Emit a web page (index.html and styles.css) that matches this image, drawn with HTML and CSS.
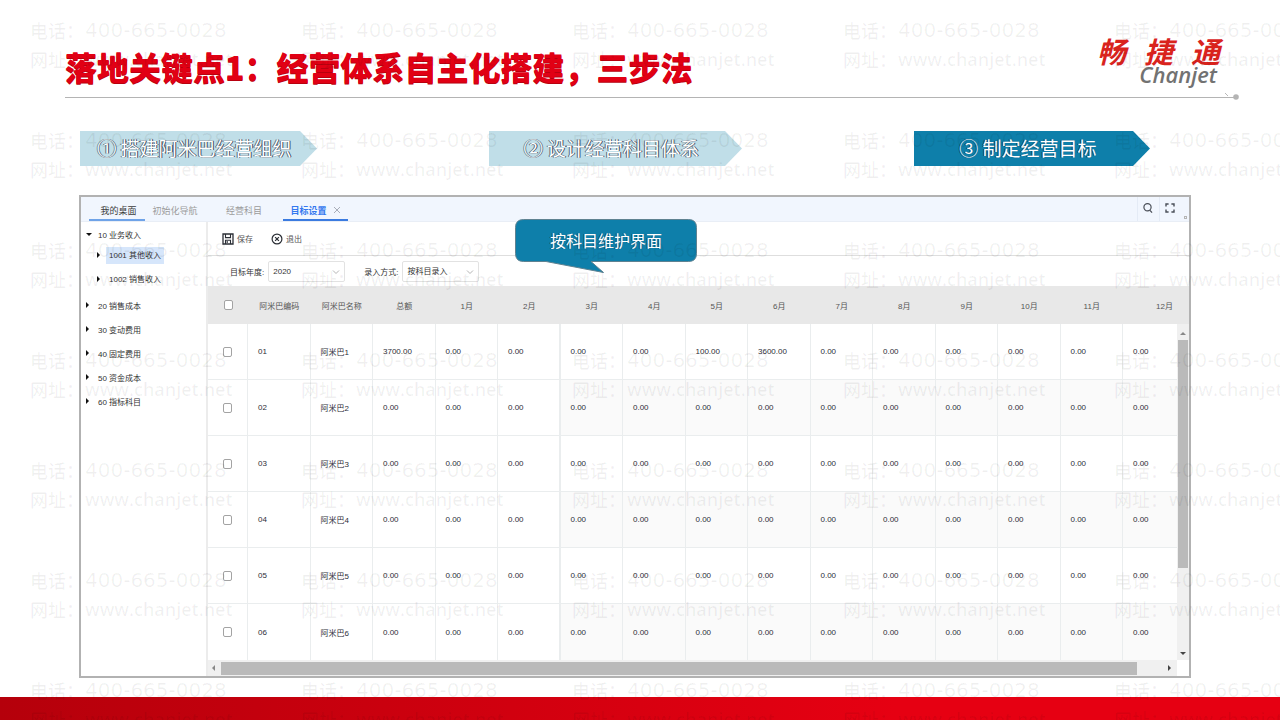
FILE: index.html
```html
<!DOCTYPE html>
<html lang="zh-CN">
<head>
<meta charset="utf-8">
<meta name="viewport" content="width=device-width, initial-scale=1">
<title>落地关键点1：经营体系自主化搭建，三步法</title>
<link rel="stylesheet" href="styles.css">
</head>
<body>
<div class="slide">
  <header class="slide-header">
    <h1 class="title">落地关键点1：经营体系自主化搭建，三步法</h1>
    <div class="logo">
      <div class="logo-cn"><span>畅</span><span>捷</span><span>通</span></div>
      <div class="logo-en">Chanjet</div>
    </div>
  </header>
  <div class="rule"><svg class="rule-end" viewBox="0 0 16 12" aria-hidden="true"><path d="M2 2l3 3" stroke="#b9b9b9"/><circle cx="13" cy="6" r="2.8" fill="#b4b4b4"/></svg></div>

  <ol class="steps">
    <li class="step">① 搭建阿米巴经营组织</li>
    <li class="step step-wide">② 设计经营科目体系</li>
    <li class="step step-active">③ 制定经营目标</li>
  </ol>

  <main class="app">
    <nav class="tabs">
      <button class="tab tab-home">我的桌面</button>
      <button class="tab tab-nav">初始化导航</button>
      <button class="tab tab-subject">经营科目</button>
      <button class="tab tab-current">目标设置
        <svg class="close" viewBox="0 0 8 8" aria-hidden="true"><path d="M1 1l6 6M7 1l-6 6" stroke="#a8adb8" fill="none"/></svg>
      </button>
      <div class="tab-tools">
        <button class="tool" aria-label="搜索"><svg viewBox="0 0 12 12"><circle cx="5.5" cy="5.3" r="3.6" fill="none" stroke="#4a4f58" stroke-width="1.2"/><path d="M8 8.4l2 2.2" stroke="#4a4f58" stroke-width="1.3"/></svg></button>
        <button class="tool" aria-label="全屏"><svg viewBox="0 0 12 12"><path d="M2 4.6V2h2.600M7.400 2H10v2.600M10 7.400V10H7.400M4.600 10H2V7.400" fill="none" stroke="#4a4f58" stroke-width="1.4"/></svg></button>
        <span class="grip"></span>
      </div>
    </nav>

    <div class="workspace">
      <aside class="side">
        <ul class="tree">
          <li><div class="node open">10 业务收入</div>
            <ul class="subtree">
              <li><div class="node"><span class="selected">1001 其他收入</span></div></li>
              <li><div class="node"><span class="leaf">1002 销售收入</span></div></li>
            </ul>
          </li>
          <li><div class="node">20 销售成本</div></li>
          <li><div class="node">30 变动费用</div></li>
          <li><div class="node">40 固定费用</div></li>
          <li><div class="node">50 资金成本</div></li>
          <li><div class="node">60 指标科目</div></li>
        </ul>
      </aside>

      <section class="content">
        <div class="actions">
          <button class="action"><svg viewBox="0 0 12 12" aria-hidden="true"><path d="M1 1h10v10H1z" fill="none" stroke="#2b2f36" stroke-width="1.3"/><path d="M3.5 1v3.6h5V1M3.5 11V7.2h5V11M5.2 8v2" fill="none" stroke="#2b2f36" stroke-width="1.1"/></svg>保存</button>
          <button class="action"><svg viewBox="0 0 12 12" aria-hidden="true"><circle cx="6" cy="6" r="4.9" fill="none" stroke="#2b2f36" stroke-width="1.2"/><path d="M4.1 4.1l3.8 3.8M7.9 4.1L4.1 7.9" stroke="#2b2f36" stroke-width="1.2"/></svg>退出</button>
        </div>
        <div class="filters">
          <div class="field">
            <label for="year">目标年度:</label>
            <div class="select-box"><select id="year"><option>2020</option></select><svg class="chevron" viewBox="0 0 8 8" aria-hidden="true"><path d="M1 2.5l3 3 3-3" fill="none" stroke="#b5b5b5"/></svg></div>
          </div>
          <div class="field">
            <label for="mode">录入方式:</label>
            <div class="select-box"><select id="mode"><option>按科目录入</option></select><svg class="chevron" viewBox="0 0 8 8" aria-hidden="true"><path d="M1 2.5l3 3 3-3" fill="none" stroke="#b5b5b5"/></svg></div>
          </div>
        </div>

        <table class="grid">
          <colgroup>
            <col class="col-check"><col span="14"><col class="col-last"><col class="col-scroll">
          </colgroup>
          <thead>
            <tr>
              <th><input type="checkbox" aria-label="全选"></th>
              <th>阿米巴编码</th><th>阿米巴名称</th><th>总额</th>
              <th>1月</th><th>2月</th><th>3月</th><th>4月</th><th>5月</th><th>6月</th><th>7月</th><th>8月</th><th>9月</th><th>10月</th><th>11月</th>
              <th class="head-last" colspan="2">12月</th>
            </tr>
          </thead>
          <tbody id="rows"></tbody>
        </table>
        <div class="hscroll">
          <div class="htrack"><i class="arrow arrow-left"></i><div class="hthumb"></div><i class="arrow arrow-right"></i></div>
        </div>
      </section>
    </div>

    <div class="callout">
      <svg class="callout-shape" viewBox="0 0 184 56" aria-hidden="true"><path d="M9.500 1.500H174.500Q182.500 1.500 182.500 9.500V35.500Q182.500 43.500 174.500 43.500H77L89.500 54.500L32 43.500H9.500Q1.500 43.500 1.500 35.500V9.500Q1.500 1.500 9.500 1.500Z" fill="#0e7faa" stroke="#5f8291"/></svg>
      <span class="callout-text">按科目维护界面</span>
    </div>
  </main>

  <footer class="footer"></footer>
  <div class="watermark" id="watermark" aria-hidden="true"></div>
</div>
<script src="script.js"></script>
</body>
</html>
```

FILE: styles.css
```css
*, *::before { box-sizing: border-box; }

body {
  margin: 0;
  background: #fff;
  color: #333;
  font-family: "Liberation Sans", "Noto Sans CJK SC", sans-serif;
}

button {
  border: 0;
  padding: 0;
  background: none;
  color: inherit;
  font: inherit;
}

ul, ol { margin: 0; padding: 0; list-style: none; }

.slide {
  position: relative;
  display: flex;
  flex-direction: column;
  min-height: 100vh;
  overflow: hidden;
}

/* Heading */
.slide-header {
  display: flex;
  justify-content: space-between;
  height: 97px;
  padding: 34px 60px 0 65px;
}

.title {
  margin: 8px 0 0;
  color: #e10014;
  font: 900 32px/48px "Noto Sans CJK SC", sans-serif;
  text-shadow: 0 1px 0 #b8000f;
}

.logo { display: flex; flex-direction: column; align-items: flex-end; }

.logo-cn {
  display: flex;
  gap: 18px;
  color: #d9231d;
  font: italic 700 29px/32px "Noto Sans CJK SC", sans-serif;
}

.logo-en {
  padding-right: 3px;
  color: #727272;
  font: italic 600 22px/16px "Open Sans", sans-serif;
}

.rule {
  position: relative;
  height: 1px;
  margin: 0 44px 0 65px;
  background: #b4b4b4;
}

.rule-end { position: absolute; right: -3px; top: -6px; width: 16px; height: 12px; }

/* Three step arrows */
.steps {
  display: flex;
  justify-content: space-between;
  margin: 33px 130px 29px 80px;
}

.step {
  display: flex;
  align-items: center;
  justify-content: center;
  width: 237px;
  height: 35px;
  padding: 0 8px 2px 0;
  background: #c0dee8;
  clip-path: polygon(0 0, calc(100% - 17px) 0, 100% 50%, calc(100% - 17px) 100%, 0 100%);
  color: #fff;
  font: 400 19px/28px "Noto Sans CJK SC", sans-serif;
  text-shadow: 1px 0 0 #3e4c5c, -1px 0 0 #56687a;
}

.step-wide { width: 253px; }

.step-active {
  width: 236px;
  background: #0e7faa;
  text-shadow: -1px 0 0 #10405e;
}

/* Application window */
.app {
  position: relative;
  display: flex;
  flex: 1;
  flex-direction: column;
  margin: 0 89px 19px 79px;
  border: 2px solid #b2b2b2;
  font-size: 8px;
}

.tabs {
  display: flex;
  height: 25px;
  padding-left: 8px;
  border-bottom: 1px solid #e9eef6;
  background: #f1f6fe;
  color: #9b9b9b;
  font-size: 9px;
}

.tab {
  display: flex;
  align-items: center;
  justify-content: center;
  gap: 6px;
  height: 24px;
  padding-top: 4px;
  border-bottom: 2px solid transparent;
}

.tab-home { width: 56px; padding-left: 3px; border-color: #6fa3e8; color: #3d3d3d; }
.tab-nav { width: 60px; }
.tab-subject { width: 78px; }
.tab-current { width: 65px; border-color: #3b7be0; color: #3478ef; font-weight: 700; }
.close { width: 8px; height: 8px; }

.tab-tools { display: flex; gap: 1px; margin-left: auto; }
.tool { width: 21px; border-left: 1px solid #e4ebf6; }
.tool svg { width: 12px; height: 12px; }
.grip { align-self: flex-end; width: 3px; height: 3px; margin: 0 2px 2px 3px; border: 1px solid #b5b5b5; }

.workspace { display: flex; flex: 1; }

.side {
  width: 127px;
  flex: none;
  border-right: 2px solid #ececec;
}

.node {
  display: flex;
  align-items: center;
  height: 24px;
  padding-left: 5px;
}

.node::before {
  content: "";
  width: 3px;
  margin-right: 9px;
  border: solid transparent;
  border-width: 3px 0 3px 3px;
  border-left-color: #111;
}

.node.open::before {
  width: 6px;
  margin-right: 6px;
  border-width: 3px 3px 0;
  border-color: #111 transparent transparent;
}

.subtree { margin: -3px 0 2px; }
.subtree .node { padding-left: 16px; }
.subtree .node::before { margin-right: 6px; }
.selected, .leaf { padding: 0 3px; line-height: 17px; }
.selected { background: #d6e6fb; }

.content { flex: 1; min-width: 0; }

.actions {
  display: flex;
  align-items: center;
  gap: 18px;
  height: 34px;
  padding-left: 14px;
  border-bottom: 1px solid #dedede;
}

.action { display: flex; align-items: center; gap: 3px; color: #555; }
.action svg { width: 12px; height: 12px; }

.filters {
  display: flex;
  align-items: center;
  gap: 19px;
  height: 30px;
  padding-left: 22px;
}

.field { display: flex; align-items: center; gap: 4px; }
.select-box { position: relative; }

.select-box select {
  display: block;
  width: 77px;
  height: 21px;
  padding: 0 4px;
  appearance: none;
  border: 1px solid #e2e2e2;
  border-radius: 2px;
  background: #fff;
  color: #333;
  font: inherit;
}

.chevron { position: absolute; right: 5px; top: 7px; width: 8px; height: 8px; }

/* Target table */
.grid {
  width: 100%;
  table-layout: fixed;
  border-collapse: separate;
  border-spacing: 0;
}

.col-check { width: 40px; }
.col-last { width: 54px; }
.col-scroll { width: 12px; }

.grid th {
  height: 38px;
  padding: 0;
  background: #e8e8e8;
  color: #555;
  font-weight: 400;
}

.grid th.head-last { padding-right: 16px; text-align: right; }

.grid td {
  height: 56px;
  padding: 0 0 0 10px;
  border-right: 1px solid #eaedee;
  border-bottom: 1px solid #eaedee;
  color: #2e2e38;
}

.grid td.pick { padding: 0; text-align: center; }
.grid td.pinned-end { border-right-width: 2px; }
.grid tr:nth-child(even) td.month { background: #fafafa; }
.grid tr:last-child td { border-bottom: 0; }
.grid td.month-last { border-right: 0; }

.grid input {
  display: block;
  width: 9px;
  height: 10px;
  margin: 0 auto;
  appearance: none;
  border: 1px solid #a3a3a3;
  border-radius: 2px;
  background: #fff;
}

.grid td.vscroll { height: 336px; padding: 0; border: 0; background: #f0f0f0; }
.vtrack { display: flex; flex-direction: column; align-items: center; height: 336px; padding: 8px 0 5px; }
.vthumb { width: 10px; height: 228px; margin: 5px 0 auto; background: #bababa; }

.arrow { width: 0; height: 0; border: 3px solid transparent; }
.arrow-up { border-top: 0; border-bottom-color: #888; }
.arrow-down { border-bottom: 0; border-top-color: #444; }
.arrow-left { border-left: 0; border-right-color: #888; }
.arrow-right { border-right: 0; border-left-color: #444; }

.hscroll { height: 16px; padding-right: 12px; }
.htrack { display: flex; align-items: center; height: 16px; padding: 0 6px 0 4px; background: #f0f0f0; }
.hthumb { flex: 1; height: 13px; margin: 0 31px 0 6px; background: #bababa; }

/* Speech bubble over the toolbar */
.callout { position: absolute; left: 433px; top: 21px; width: 184px; height: 56px; }
.callout-shape { position: absolute; width: 184px; height: 56px; }

.callout-text {
  position: relative;
  display: block;
  padding-top: 10px;
  color: #fff;
  font: 400 16px/24px "Noto Sans CJK SC", sans-serif;
  text-align: center;
  text-shadow: -1px 0 0 #10506e;
}

.footer { height: 23px; background: linear-gradient(90deg, #b5000b, #e60012 70%); }

/* Repeating contact watermark */
.watermark {
  position: absolute;
  inset: 16px 0 0 30px;
  display: grid;
  grid-template-columns: repeat(5, 241px);
  grid-auto-rows: 80px;
  gap: 30px;
  overflow: hidden;
  color: rgba(0, 0, 0, 0.06);
  font: 500 18px/29px "Noto Sans CJK SC", sans-serif;
  white-space: nowrap;
  pointer-events: none;
}

.mark-line { display: flex; }
.mark-label { width: 55px; }
.mark-phone { font: 20px/29px "DejaVu Sans", sans-serif; }
.mark-url { font: 600 18px/29px "Open Sans", sans-serif; }
```

FILE: script.js
```js
const rows = [
  { total: "3700.00", months: { 5: "100.00", 6: "3600.00" } },
  {}, {}, {}, {}, {}
];

const scrollCell = '<td class="vscroll" rowspan="6"><div class="vtrack"><i class="arrow arrow-up"></i><div class="vthumb"></div><i class="arrow arrow-down"></i></div></td>';

document.getElementById("rows").innerHTML = rows.map((row, i) => {
  const n = i + 1;
  let cells = `<td class="pick"><input type="checkbox" aria-label="选择 0${n}"></td>`;
  cells += `<td>0${n}</td><td>阿米巴${n}</td><td>${row.total || "0.00"}</td>`;
  for (let m = 1; m <= 12; m++) {
    const value = (row.months && row.months[m]) || "0.00";
    const kind = m > 2 ? "month" : m === 2 ? "pinned-end" : "";
    cells += `<td class="${kind}${m === 12 ? " month-last" : ""}">${value}</td>`;
  }
  return `<tr>${cells}${i === 0 ? scrollCell : ""}</tr>`;
}).join("");

const mark = '<div class="mark"><div class="mark-line"><span class="mark-label">电话：</span><span class="mark-phone">400-665-0028</span></div><div class="mark-line"><span class="mark-label">网址：</span><span class="mark-url">www.chanjet.net</span></div></div>';
document.getElementById("watermark").innerHTML = mark.repeat(35);
```
